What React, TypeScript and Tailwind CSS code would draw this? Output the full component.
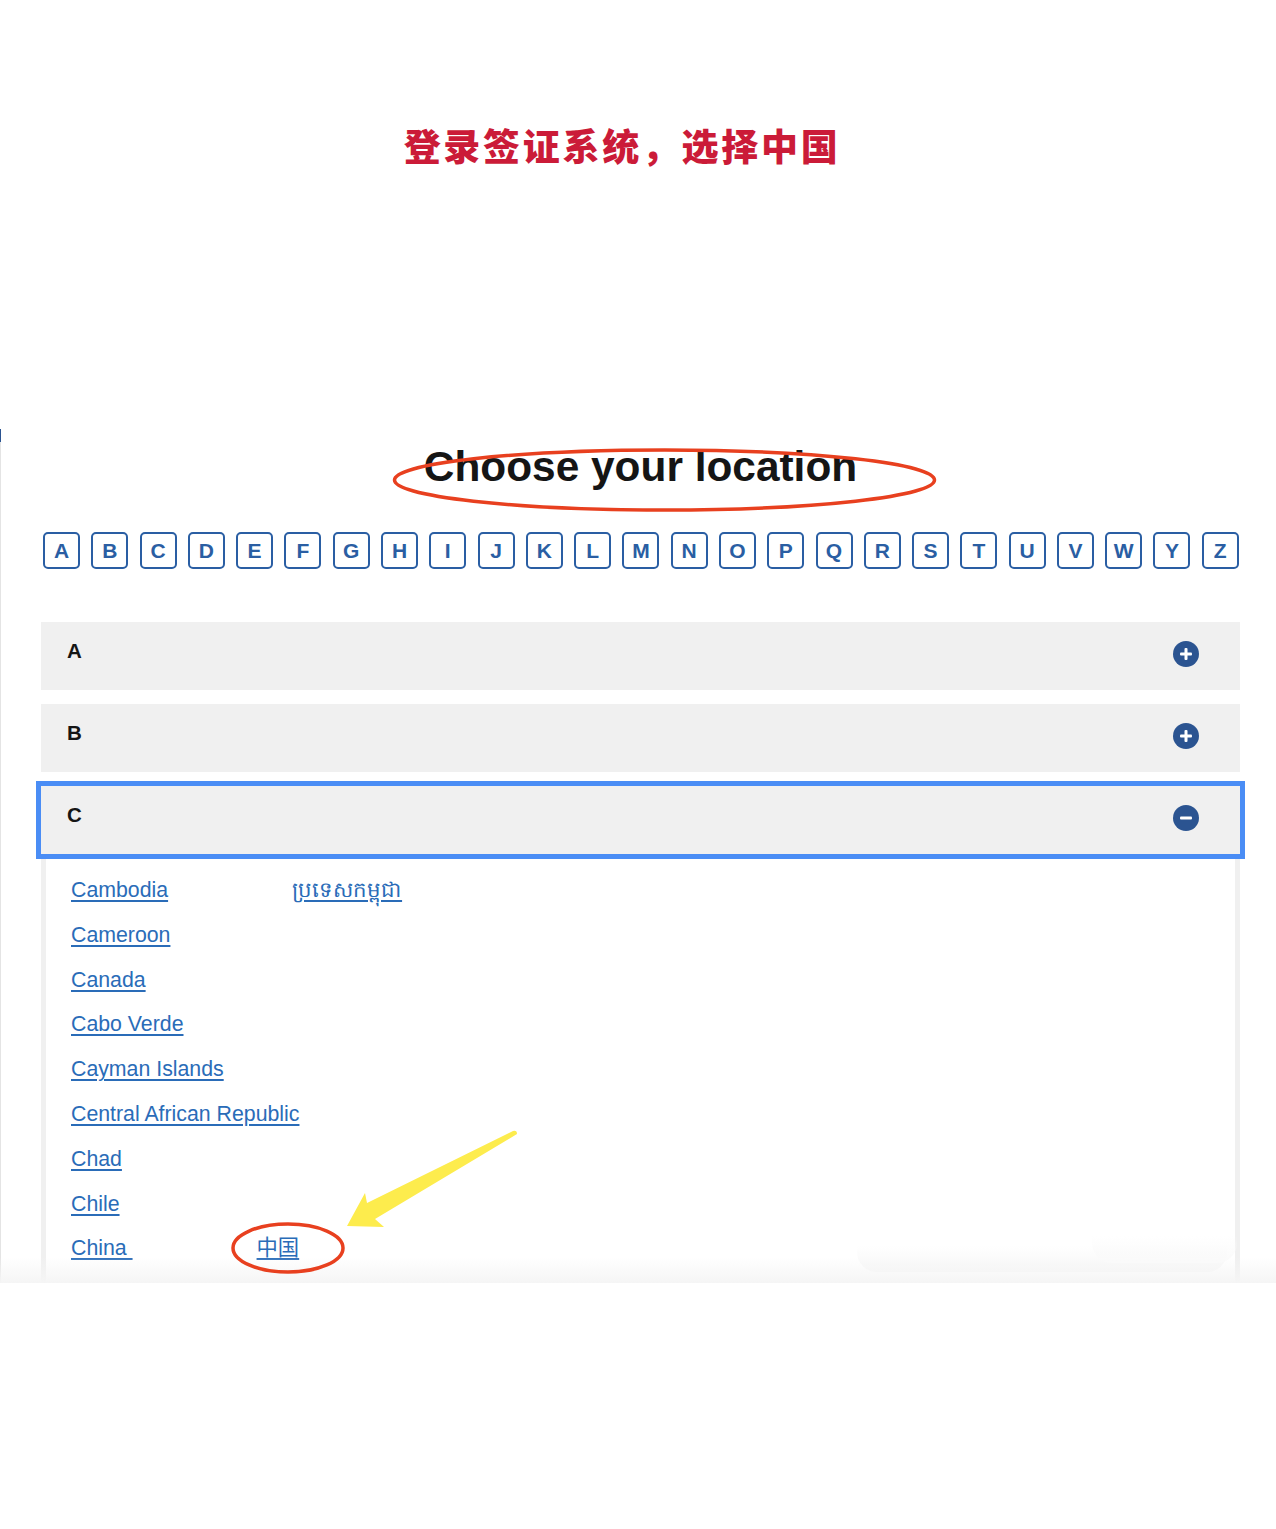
const letters = 'ABCDEFGHIJKLMNOPQRSTUVWYZ'.split('')

const countries = [
  { name: 'Cambodia', native: 'ប្រទេសកម្ពុជា', gap: 'ml-[124px]' },
  { name: 'Cameroon' },
  { name: 'Canada' },
  { name: 'Cabo Verde' },
  { name: 'Cayman Islands' },
  { name: 'Central African Republic' },
  { name: 'Chad' },
  { name: 'Chile' },
  { name: 'China\u00a0', native: '中国', gap: 'ml-[124px]' },
]

function ToggleIcon({ open }: { open?: boolean }) {
  return (
    <svg width="26" height="26" viewBox="0 0 26 26" className="shrink-0">
      <circle cx="13" cy="13" r="13" fill="#2b5491" />
      <rect x="7" y="11.5" width="12" height="3" rx="1" fill="#fff" />
      {!open && <rect x="11.5" y="7" width="3" height="12" rx="1" fill="#fff" />}
    </svg>
  )
}

function AccordionRow({ label, open }: { label: string; open?: boolean }) {
  return (
    <div className="flex h-[68px] items-start justify-between bg-[#f0f0f0] pl-[26px] pr-[41px] pt-[19px]">
      <span className="text-[20.5px] font-bold leading-[20px] text-[#151515]">{label}</span>
      <span>
        <ToggleIcon open={open} />
      </span>
    </div>
  )
}

export default function App() {
  return (
    <div className="relative h-[1529px] overflow-hidden bg-white font-['Liberation_Sans',sans-serif]">
      <main className="relative h-[1283px] overflow-hidden">
        <div className="absolute left-0 top-[429px] h-[854px] w-[1px] bg-[#e4e4e4]" />
        <div className="absolute left-0 top-[429px] h-[13px] w-[1px] bg-[#2b5491]" />

        <h2 className="flex h-[429px] justify-center pr-[32px] pt-[122px] font-['Noto_Sans_CJK_SC',sans-serif] text-[37px] font-black leading-[46px] tracking-[2.7px] text-[#cb1b38]">
          登录签证系统，选择中国
        </h2>

        <h1 className="mt-[9px] pl-[5px] text-center text-[42.4px] font-bold leading-[58px] text-[#151515]">
          Choose your location
        </h1>

        <nav className="ml-[43px] mr-[37px] mt-[36px] flex justify-between">
          {letters.map((letter) => (
            <a
              key={letter}
              className="flex h-[37px] w-[37px] items-center justify-center rounded-[5px] border-2 border-[#2a5ea3] text-[21px] font-bold text-[#2a5ea3]"
            >
              {letter}
            </a>
          ))}
        </nav>

        <section className="mx-[41px] mt-[53px] w-[1199px]">
          <AccordionRow label="A" />
          <div className="mt-[14px]">
            <AccordionRow label="B" />
          </div>
          <div className="relative z-10 mx-[-5px] mt-[9px] border-[5px] border-[#4a8df5]">
            <AccordionRow label="C" open />
          </div>
          <div className="h-[600px] border-x-[5px] border-[#f0f0f0] bg-white pl-[25px] pt-[17px]">
            <ul className="flex flex-col gap-[16.8px]">
              {countries.map((c) => (
                <li key={c.name} className="flex h-[28px] items-center text-[21.3px] leading-[28px] text-[#2a6cb8]">
                  <a className="underline underline-offset-[3px]">{c.name}</a>
                  {c.native && (
                    <a className={`${c.gap} font-['Liberation_Sans','Noto_Sans_CJK_SC',sans-serif] underline underline-offset-[3px]`}>
                      {c.native}
                    </a>
                  )}
                </li>
              ))}
            </ul>
          </div>
        </section>

        {/* faint fade at the cut-off edge, with the ghost shapes showing through it */}
        <div className="absolute bottom-0 left-0 right-0 h-[26px] bg-gradient-to-b from-[#ffffff00] to-[#f5f5f5]" />
        <div className="absolute left-[857px] top-[1246px] h-[26px] w-[370px] rounded-b-[20px] bg-gradient-to-b from-[#ffffff00] to-[#f6f6f6]" />
        <div className="absolute left-[1092px] top-[1236px] h-[27px] w-[145px] rounded-b-[20px] bg-gradient-to-b from-[#ffffff00] to-[#fafafa]" />

        <svg className="absolute left-0 top-0" width="1276" height="1283" viewBox="0 0 1276 1283" fill="none">
          <ellipse cx="664.5" cy="480" rx="270" ry="30" stroke="#e8401f" strokeWidth="3.5" />
          <ellipse cx="288" cy="1248" rx="55" ry="24" stroke="#e8401f" strokeWidth="3.5" />
          <path
            d="M517 1134 Q517 1130 513 1131 L367 1203 L365 1193 L347 1226 L384 1227 L375 1219 Z"
            fill="#fdec4d"
          />
        </svg>
      </main>
    </div>
  )
}
